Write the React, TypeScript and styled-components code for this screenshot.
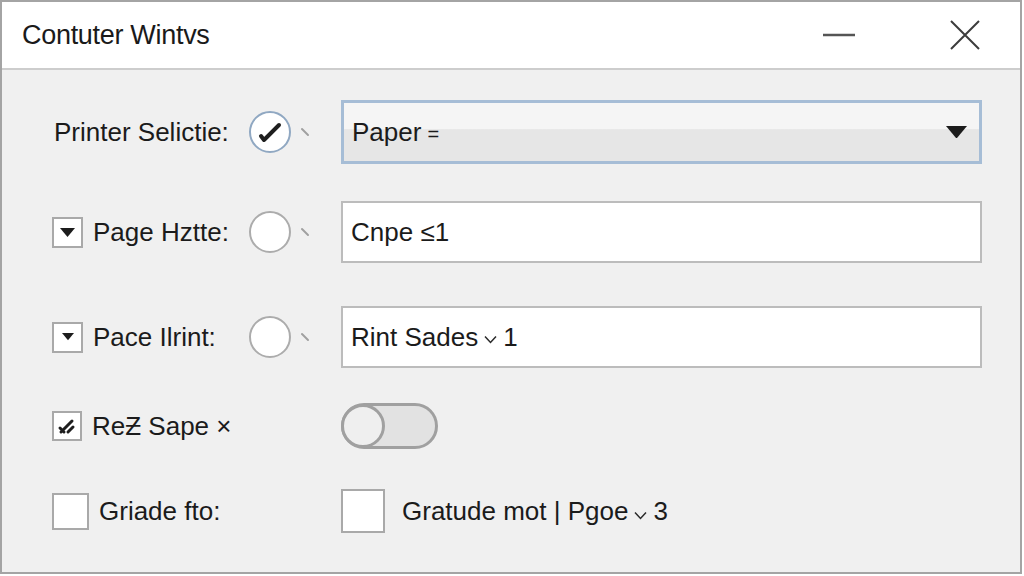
import styled, { createGlobalStyle } from 'styled-components';

const GlobalStyle = createGlobalStyle`
  html, body {
    margin: 0;
    padding: 0;
    background: #ffffff;
  }
  body {
    font-family: 'Liberation Sans', Arial, sans-serif;
    color: #1b1b1b;
  }
`;

const Window = styled.div`
  width: 1022px;
  height: 574px;
  box-sizing: border-box;
  border: 2px solid #a4a4a4;
  background: #f0f0f0;
  display: flex;
  flex-direction: column;
`;

const TitleBar = styled.div`
  height: 66px;
  background: #ffffff;
  border-bottom: 2px solid #cdcdcd;
  display: flex;
  align-items: center;
  padding: 0 38px 0 20px;
`;

const Title = styled.div`
  flex: 1;
  font-size: 27px;
  letter-spacing: -0.3px;
  color: #1a1a1a;
`;

const TitleButton = styled.button`
  border: none;
  background: none;
  padding: 0;
  width: 34px;
  height: 34px;
  display: flex;
  align-items: center;
  justify-content: center;
  margin-left: 92px;
`;

const Body = styled.div`
  display: flex;
  flex-direction: column;
  padding: 0 38px 0 50px;
`;

const Row = styled.div<{ top: number; h: number }>`
  display: grid;
  grid-template-columns: 197px 92px 1fr;
  align-items: center;
  margin-top: ${({ top }) => top}px;
  height: ${({ h }) => h}px;
`;

const LabelCell = styled.div<{ gap?: number }>`
  display: flex;
  align-items: center;
  gap: ${({ gap }) => gap ?? 10}px;
  font-size: 26px;
  white-space: nowrap;
`;

const Label = styled.span<{ shift?: number }>`
  margin-left: ${({ shift }) => shift ?? 0}px;
`;

const Box = styled.div<{ size: number }>`
  width: ${({ size }) => size}px;
  height: ${({ size }) => size}px;
  box-sizing: border-box;
  border: 2px solid #a9a9a9;
  background: #ffffff;
  display: flex;
  align-items: center;
  justify-content: center;
  flex-shrink: 0;
`;

const RadioCell = styled.div`
  display: flex;
  align-items: center;
  gap: 9px;
`;

const Radio = styled.div<{ active?: boolean }>`
  width: 42px;
  height: 42px;
  box-sizing: border-box;
  border-radius: 50%;
  border: 2px solid ${({ active }) => (active ? '#90a8c2' : '#acacac')};
  background: #ffffff;
  display: flex;
  align-items: center;
  justify-content: center;
`;

const Select = styled.div`
  height: 64px;
  box-sizing: border-box;
  border: 3px solid #a6bdd6;
  background: linear-gradient(#f5f5f5 0%, #f5f5f5 44%, #e6e6e6 46%, #e6e6e6 100%);
  display: flex;
  align-items: center;
  padding: 0 12px 0 8px;
  font-size: 26px;
`;

const SelectText = styled.span`
  flex: 1;
`;

const Mark = styled.span`
  font-size: 20px;
  margin-left: 6px;
`;

const TextField = styled.div`
  height: 62px;
  box-sizing: border-box;
  border: 2px solid #bcbcbc;
  background: #ffffff;
  display: flex;
  align-items: center;
  padding: 0 8px;
  font-size: 26px;
  white-space: pre;
`;

const Toggle = styled.div`
  width: 97px;
  height: 46px;
  box-sizing: border-box;
  border: 3px solid #a0a0a0;
  border-radius: 23px;
  background: #e2e2e2;
  display: flex;
  align-items: center;
`;

const Knob = styled.div`
  width: 44px;
  height: 44px;
  margin-left: -3px;
  box-sizing: border-box;
  border-radius: 50%;
  border: 3px solid #a0a0a0;
  background: #efefef;
`;

const OptionCell = styled.div`
  display: flex;
  align-items: center;
  gap: 17px;
  font-size: 26px;
  white-space: pre;
`;

const ChevronWrap = styled.span`
  display: inline-flex;
  align-items: center;
  margin: 4px 6px 0 6px;
`;

const Chevron = () => (
  <ChevronWrap>
    <svg width="13" height="9" viewBox="0 0 13 9">
      <path d="M1 1.5 L6.5 7.5 L12 1.5" stroke="#2a2a2a" strokeWidth="1.5" fill="none" />
    </svg>
  </ChevronWrap>
);

const Tick = () => (
  <svg width="10" height="10" viewBox="0 0 10 10">
    <path d="M2 2 L8 8" stroke="#a0a0a0" strokeWidth="2" strokeLinecap="round" />
  </svg>
);

const DownTriangle = ({ w }: { w: number }) => (
  <svg width={w} height={w * 0.6} viewBox="0 0 10 6">
    <path d="M0 0 L10 0 L5 6 Z" fill="#1c1c1c" />
  </svg>
);

const App = () => {
  return (
    <>
      <GlobalStyle />
      <Window>
        <TitleBar>
          <Title>Contuter Wintvs</Title>
          <TitleButton aria-label="minimize">
            <svg width="34" height="4" viewBox="0 0 34 4">
              <path d="M1 2 H33" stroke="#555" strokeWidth="2.5" />
            </svg>
          </TitleButton>
          <TitleButton aria-label="close">
            <svg width="30" height="30" viewBox="0 0 30 30">
              <path d="M1 1 L29 29 M29 1 L1 29" stroke="#3c3c3c" strokeWidth="2" />
            </svg>
          </TitleButton>
        </TitleBar>
        <Body>
          <Row top={30} h={64}>
            <LabelCell>
              <Label shift={2}>Printer Selictie:</Label>
            </LabelCell>
            <RadioCell>
              <Radio active>
                <svg width="26" height="26" viewBox="0 0 26 26">
                  <path
                    d="M4 17 L7 21 L22 6"
                    stroke="#1e1e1e"
                    strokeWidth="4"
                    fill="none"
                    strokeLinecap="round"
                    strokeLinejoin="round"
                  />
                </svg>
              </Radio>
              <Tick />
            </RadioCell>
            <Select>
              <SelectText>
                Paper<Mark>=</Mark>
              </SelectText>
              <DownTriangle w={21} />
            </Select>
          </Row>

          <Row top={37} h={62}>
            <LabelCell>
              <Box size={31}>
                <DownTriangle w={15} />
              </Box>
              <Label>Page Hztte:</Label>
            </LabelCell>
            <RadioCell>
              <Radio />
              <Tick />
            </RadioCell>
            <TextField>Cnpe ≤1</TextField>
          </Row>

          <Row top={43} h={62}>
            <LabelCell>
              <Box size={31}>
                <DownTriangle w={12} />
              </Box>
              <Label>Pace Ilrint:</Label>
            </LabelCell>
            <RadioCell>
              <Radio />
              <Tick />
            </RadioCell>
            <TextField>
              Rint Sades<Chevron />1
            </TextField>
          </Row>

          <Row top={35} h={46}>
            <LabelCell>
              <Box size={30}>
                <svg width="20" height="20" viewBox="0 0 20 20">
                  <path
                    d="M4 16 L15 5 M3 12 L7 16 M11 16 L16 11"
                    stroke="#1e1e1e"
                    strokeWidth="3"
                    fill="none"
                    strokeLinecap="round"
                  />
                </svg>
              </Box>
              <Label>ReƵ Sape ×</Label>
            </LabelCell>
            <div />
            <Toggle>
              <Knob />
            </Toggle>
          </Row>

          <Row top={39} h={46}>
            <LabelCell gap={10}>
              <Box size={37} />
              <Label>Griade fto:</Label>
            </LabelCell>
            <div />
            <OptionCell>
              <Box size={44} />
              <span>
                Gratude mot | Pgoe<Chevron />3
              </span>
            </OptionCell>
          </Row>
        </Body>
      </Window>
    </>
  );
};

export default App;
